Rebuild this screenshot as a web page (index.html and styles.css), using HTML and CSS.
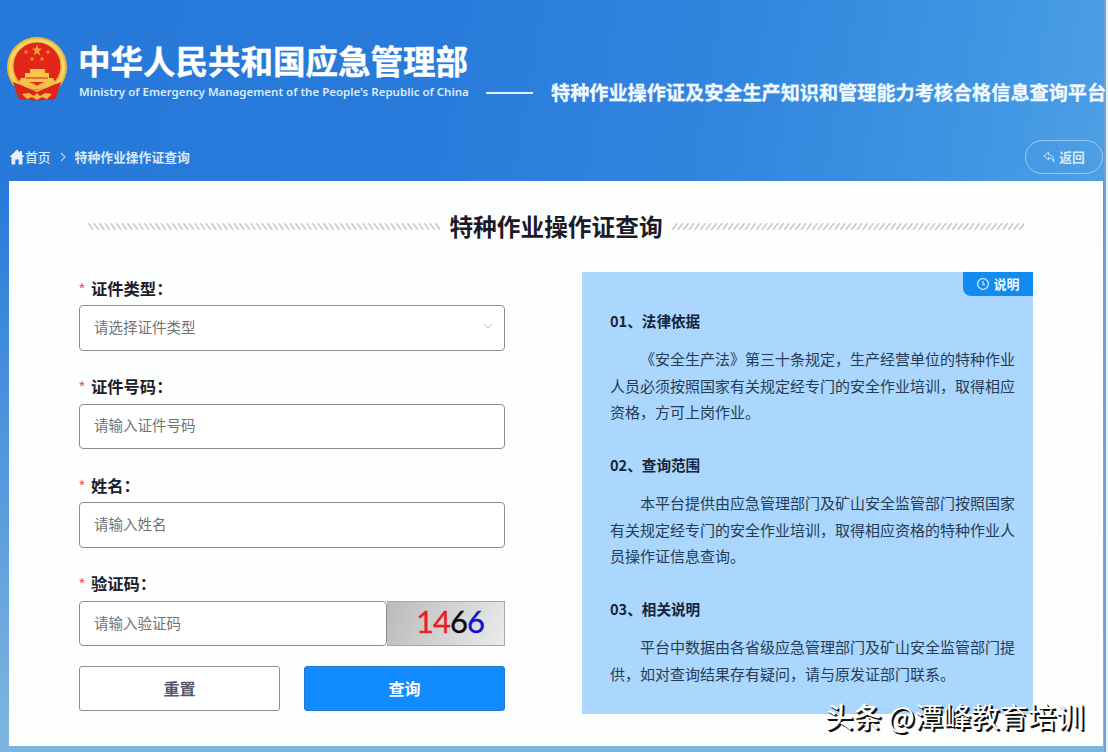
FILE: index.html
```html
<!DOCTYPE html>
<html lang="zh-CN">
<head>
  <meta charset="UTF-8" />
  <meta name="viewport" content="width=device-width, initial-scale=1" />
  <title>特种作业操作证查询</title>
  <link rel="stylesheet" href="styles.css">
</head>
<body>
  <div class="page">
    <header class="header">
      <svg class="emblem" viewBox="0 0 62 66" width="62" height="66">
        <path d="M11 46 L14 61 Q15 65 21 63 Q31 66 41 63 Q47 65 48 61 L51 46 Z" fill="#dc2418"/>
        <circle cx="31" cy="31" r="30" fill="#efb63c"/>
        <circle cx="31" cy="31" r="26.5" fill="none" stroke="#f9d467" stroke-width="3"/>
        <circle cx="31" cy="30" r="23.5" fill="#e2261a"/>
        <path d="M31 8 L32.3 12.5 L36 12.5 L33 15.2 L34.3 19.5 L31 17 L27.7 19.5 L29 15.2 L26 12.5 L29.7 12.5 Z" fill="#f3a039"/>
        <g fill="#f08a39">
          <circle cx="20" cy="16" r="1.7"/><circle cx="42" cy="16" r="1.7"/>
          <circle cx="26" cy="23" r="1.7"/><circle cx="36" cy="23" r="1.7"/>
        </g>
        <path d="M24 33 H39 V37 H43 V42 H47 L49 46 H13 L15 42 H19 V37 H24 Z" fill="#f7c64c"/>
        <path d="M20 42 H42" stroke="#dc3a1c" stroke-width="1.2"/>
        <path d="M7 46 Q18 50 31 56 Q44 50 55 46 L50 62 Q44 66 39 62 Q31 66 23 62 Q17 66 12 62 Z" fill="#dc2418"/>
        <path d="M13 46 Q24 44 31 50 Q38 44 49 46 Q42 54 31 53 Q20 54 13 46 Z" fill="#f5c148"/>
        <path d="M16 58 L23 57 L28 60 L31 57 L34 60 L39 57 L46 58 L41 63 L36 61 L31 64 L26 61 L21 63 Z" fill="#f5b845"/>
      </svg>
      <div class="brand">
        <div class="brand-cn">中华人民共和国应急管理部</div>
        <div class="brand-en">Ministry of Emergency Management of the People's Republic of China</div>
      </div>
      <div class="brand-line"></div>
      <div class="platform">特种作业操作证及安全生产知识和管理能力考核合格信息查询平台</div>
    </header>

    <nav class="crumbs">
      <svg class="home" viewBox="0 0 16 16" width="16" height="16"><path d="M8 0.5 L0.5 8 H2.5 V15.5 H6.3 V10.5 H9.7 V15.5 H13.5 V8 H15.5 L13 5.4 V2 H11 V3.5 Z" fill="#e4f1fd"/></svg>
      <span>首页</span>
      <svg class="sep" viewBox="0 0 6 10" width="6" height="10"><path d="M1 1 L5 5 L1 9" fill="none" stroke="#a9cdf1" stroke-width="1.2"/></svg>
      <span class="current">特种作业操作证查询</span>
      <a class="back" href="#">
        <svg viewBox="0 0 12 12" width="12" height="12"><path d="M5.5 1 L1 5 L5.5 9 V6.5 Q9 6.5 11 11 Q11 4 5.5 3.5 Z" fill="none" stroke="#cfe5f9" stroke-width="1"/></svg>
        <span>返回</span>
      </a>
    </nav>

    <main class="panel">
      <div class="title-row">
        <svg class="hatch" width="352" height="7">
          <defs>
            <pattern id="hatch-left" width="5.6" height="7" patternUnits="userSpaceOnUse"><path d="M0.3 0.3 L5 6.7" stroke="#b2b2b5" stroke-width="1.1"/></pattern>
          </defs>
          <rect width="352" height="7" fill="url(#hatch-left)"/>
        </svg>
        <h1>特种作业操作证查询</h1>
        <svg class="hatch" width="352" height="7">
          <defs>
            <pattern id="hatch-right" width="5.6" height="7" patternUnits="userSpaceOnUse"><path d="M5.2 0.3 L0.4 6.7" stroke="#b2b2b5" stroke-width="1.1"/></pattern>
          </defs>
          <rect width="352" height="7" fill="url(#hatch-right)"/>
        </svg>
      </div>

      <div class="columns">
        <form class="query-form">
          <label><i>*</i>证件类型：</label>
          <div class="field">
            <span>请选择证件类型</span>
            <svg viewBox="0 0 10 6" width="10" height="6"><path d="M1 1 L5 5 L9 1" fill="none" stroke="#c4c6c9" stroke-width="1"/></svg>
          </div>
          <label><i>*</i>证件号码：</label>
          <div class="field"><span>请输入证件号码</span></div>
          <label><i>*</i>姓名：</label>
          <div class="field"><span>请输入姓名</span></div>
          <label><i>*</i>验证码：</label>
          <div class="code-row">
            <div class="field"><span>请输入验证码</span></div>
            <div class="captcha"><b class="red">1</b><b class="red">4</b><b class="black">6</b><b class="blue">6</b></div>
          </div>
          <div class="buttons">
            <button type="button" class="btn">重置</button>
            <button type="button" class="btn btn-primary">查询</button>
          </div>
        </form>

        <section class="notice">
          <div class="tag">
            <svg viewBox="0 0 14 14" width="14" height="14"><circle cx="7" cy="7" r="5.4" fill="none" stroke="#b9dcfc" stroke-width="1.5"/><path d="M7 4 V7.5 H9" fill="none" stroke="#b9dcfc" stroke-width="1.3"/></svg>
            <span>说明</span>
          </div>
          <h2>01、法律依据</h2>
          <p>《安全生产法》第三十条规定，生产经营单位的特种作业人员必须按照国家有关规定经专门的安全作业培训，取得相应资格，方可上岗作业。</p>
          <h2>02、查询范围</h2>
          <p>本平台提供由应急管理部门及矿山安全监管部门按照国家有关规定经专门的安全作业培训，取得相应资格的特种作业人员操作证信息查询。</p>
          <h2>03、相关说明</h2>
          <p>平台中数据由各省级应急管理部门及矿山安全监管部门提供，如对查询结果存有疑问，请与原发证部门联系。</p>
        </section>
      </div>
    </main>
    <div class="watermark"><b>头条</b> @潭峰教育培训</div>
  </div>
</body>
</html>
```
FILE: styles.css
```css
* {
  box-sizing: border-box;
}

body {
  margin: 0;
  font-family: "Noto Sans CJK SC", sans-serif;
  background: #e9f7fd;
}

.page {
  position: relative;
  width: 1106px;
  height: 752px;
  padding: 0 3px 0 9px;
  overflow: hidden;
  background:
    linear-gradient(90deg, transparent 1104px, #6fa4d0 1104px),
    linear-gradient(180deg, rgba(125, 181, 223, 0) 180px, rgba(125, 181, 223, 0.55) 480px, #7db5df 740px),
    linear-gradient(100deg, #2679d9 0%, #287bdb 35%, #3285de 60%, #4197e3 82%, #58a6e7 100%);
}

.header {
  display: flex;
  height: 134px;
  margin-left: -3px;
  white-space: nowrap;
  color: #fff;
}

.emblem {
  flex: none;
  margin-top: 36px;
}

.brand {
  flex: none;
  width: 390px;
  margin: 37px 0 0 10px;
}

.brand-cn {
  font-size: 32.5px;
  font-weight: 700;
  line-height: 46px;
  -webkit-text-stroke: 0.4px #fff;
}

.brand-en {
  margin: 1px 0 0 1px;
  font-family: "Noto Sans", sans-serif;
  font-size: 11.5px;
  font-weight: 600;
  line-height: 16px;
  color: #dcecfc;
}

.brand-line {
  flex: none;
  width: 47px;
  height: 2px;
  margin: 92px 18px 0;
  background: #e3f3ff;
}

.platform {
  margin-top: 78px;
  font-size: 19.15px;
  font-weight: 700;
  line-height: 28px;
  color: #f2f9ff;
  -webkit-text-stroke: 0.3px #f2f9ff;
}

.crumbs {
  display: flex;
  align-items: center;
  height: 47px;
  padding-bottom: 2px;
  font-size: 12.8px;
  font-weight: 500;
  color: #d7e9fb;
}

.sep {
  margin: 0 9px;
}

.current {
  font-weight: 700;
}

.back {
  display: flex;
  align-items: center;
  justify-content: center;
  gap: 4px;
  width: 78px;
  height: 34px;
  margin-left: auto;
  border: 1.5px solid #9bcaf3;
  border-radius: 17px;
  font-weight: 700;
  color: #d7e9fb;
  text-decoration: none;
}

.panel {
  height: 565px;
  padding: 27px 70px 0;
  background: #fdfefe;
}

.title-row {
  display: flex;
  align-items: center;
  justify-content: space-between;
  height: 36px;
  padding: 0 9px;
}

.title-row h1 {
  margin: 0;
  font-size: 23.7px;
  font-weight: 700;
  line-height: 36px;
  color: #1c1a28;
}

.columns {
  display: flex;
  justify-content: space-between;
  margin-top: 28px;
}

.query-form {
  width: 426px;
}

.query-form label {
  display: block;
  height: 53px;
  padding-top: 23.5px;
  font-size: 16.3px;
  font-weight: 700;
  line-height: 24px;
  color: #201c2c;
}

.query-form label:first-child {
  height: 33px;
  padding-top: 4px;
}

.query-form label i {
  display: inline-block;
  width: 12px;
  font-family: "Liberation Sans", sans-serif;
  font-size: 15px;
  font-style: normal;
  font-weight: 400;
  line-height: 20px;
  vertical-align: 2px;
  color: #ee4035;
}

.field {
  display: flex;
  align-items: center;
  justify-content: space-between;
  height: 45.6px;
  padding: 0 11px 3px 14px;
  border: 1px solid #8d8d90;
  border-radius: 4px;
  font-size: 14.5px;
  color: #707276;
  background: #fff;
}

.code-row {
  display: flex;
}

.code-row .field {
  width: 308px;
}

.captcha {
  display: flex;
  align-items: center;
  justify-content: flex-end;
  width: 118px;
  padding: 0 20px 5px 0;
  border: 1px solid #a3a8a5;
  border-left: 0;
  background: linear-gradient(115deg, #b9bbba, #e9ecea);
  font-family: Lato, sans-serif;
  font-size: 31px;
}

.captcha b {
  width: 17px;
  font-weight: 400;
  text-align: center;
  -webkit-text-stroke: 0.3px;
}

.red {
  color: #ee1c25;
}

.black {
  color: #080808;
}

.blue {
  color: #1010cc;
}

.buttons {
  display: flex;
  justify-content: space-between;
  margin-top: 20px;
}

.btn {
  width: 201px;
  height: 45px;
  padding: 0 0 2px;
  border: 1px solid #8f8f93;
  border-radius: 3px;
  background: #fff;
  font-family: inherit;
  font-size: 16px;
  font-weight: 700;
  color: #56566a;
}

.btn-primary {
  border-color: #2277cc;
  background: #118bfe;
  color: #fff;
}

.notice {
  position: relative;
  width: 451px;
  height: 442px;
  padding: 35px 17px 0 28px;
  background: #abd6fd;
  color: #263c56;
}

.tag {
  position: absolute;
  top: 0;
  right: 0;
  display: flex;
  align-items: center;
  justify-content: center;
  gap: 3px;
  width: 70px;
  height: 24px;
  padding-bottom: 1px;
  border-bottom-left-radius: 8px;
  background: #118bed;
  font-size: 13px;
  font-weight: 700;
  color: #eaf6ff;
}

.notice h2 {
  margin: 0;
  font-size: 14.6px;
  font-weight: 700;
  line-height: 27px;
  color: #16243a;
}

.notice p {
  min-height: 80px;
  margin: 12px 0 25px;
  font-size: 15px;
  line-height: 26.6px;
  text-indent: 2em;
}

.watermark {
  position: absolute;
  left: 825px;
  top: 696px;
  font-size: 28.3px;
  line-height: 40px;
  white-space: nowrap;
  color: #fff;
  text-shadow: 1px 1px 0 #111, 2px 2px 0 #111;
}

.watermark b {
  font-weight: 500;
}
```
